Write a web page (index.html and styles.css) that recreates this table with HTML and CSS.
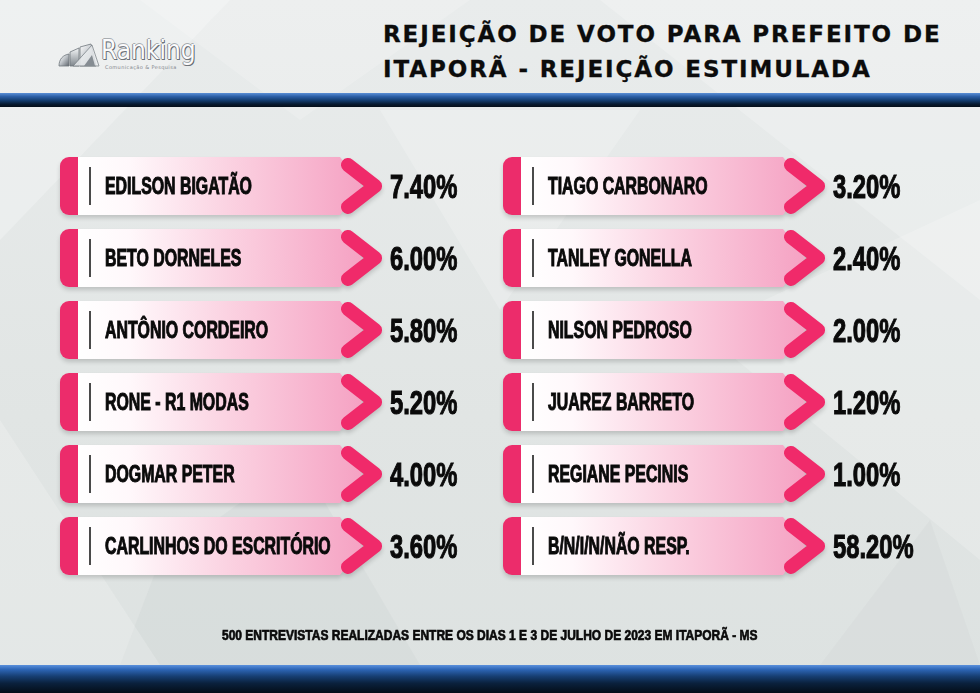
FILE: index.html
```html
<!DOCTYPE html>
<html lang="pt-BR">
<head>
<meta charset="utf-8">
<title>Rejeição de voto para prefeito de Itaporã</title>
<link rel="stylesheet" href="styles.css">
</head>
<body>
<div class="page">
  <svg class="bg" width="980" height="693" viewBox="0 0 980 693" aria-hidden="true">
    <polygon points="0,0 230,0 0,240" fill="#ffffff" opacity="0.25"/>
    <polygon points="140,0 470,0 300,120" fill="#ffffff" opacity="0.18"/>
    <polygon points="600,0 980,0 980,300" fill="#ffffff" opacity="0.22"/>
    <polygon points="380,110 640,110 500,310" fill="#ffffff" opacity="0.2"/>
    <polygon points="700,330 980,200 980,560" fill="#ffffff" opacity="0.2"/>
    <polygon points="160,560 300,460 420,665 120,665" fill="#cfd5d4" opacity="0.35"/>
    <polygon points="0,420 160,665 0,665" fill="#ffffff" opacity="0.2"/>
    <polygon points="820,665 930,520 980,665" fill="#cfd5d4" opacity="0.3"/>
  </svg>

  <header class="header">
    <div class="logo">
      <svg class="logo-icon" width="42" height="24" viewBox="0 0 42 24" aria-hidden="true">
        <defs>
          <linearGradient id="silver" x1="0" y1="0" x2="1" y2="1">
            <stop offset="0" stop-color="#ffffff"/>
            <stop offset="0.45" stop-color="#c4c9cd"/>
            <stop offset="1" stop-color="#5f666d"/>
          </linearGradient>
          <linearGradient id="silver2" x1="0" y1="0" x2="0" y2="1">
            <stop offset="0" stop-color="#f4f6f7"/>
            <stop offset="1" stop-color="#7f868c"/>
          </linearGradient>
        </defs>
        <path d="M1 23 C1 16 5 12 11 11 L11 23 Z" fill="url(#silver)" stroke="#6f767c" stroke-width="0.8"/>
        <path d="M12 23 L12 9 L21 5 L21 23 Z" fill="url(#silver2)" stroke="#6f767c" stroke-width="0.8"/>
        <path d="M22 23 L22 4 L33 1 L38 23 Z" fill="url(#silver)" stroke="#6f767c" stroke-width="0.8"/>
        <path d="M15 23 L34 2 L41 23 Z" fill="#e9ecee" stroke="#6f767c" stroke-width="0.8" opacity="0.85"/>
        <path d="M26 23 L34 12 L37 23 Z" fill="#858c92"/>
      </svg>
      <div class="logo-text">
        <span class="logo-name">Ranking</span>
        <span class="logo-sub">Comunicação &amp; Pesquisa</span>
      </div>
    </div>
    <h1 class="title">REJEIÇÃO DE VOTO PARA PREFEITO DE<br>ITAPORÃ - REJEIÇÃO ESTIMULADA</h1>
  </header>

  <div class="band band-top"></div>

  <main class="grid">
    <div class="row"><div class="bar"><div class="tab"></div><div class="body"><span class="sep"></span><span class="name">EDILSON BIGATÃO</span></div><svg class="chev" width="44" height="58" viewBox="0 0 44 58"><polyline points="8,8 35,29 8,50"/></svg></div><span class="pct">7.40%</span></div>
    <div class="row"><div class="bar"><div class="tab"></div><div class="body"><span class="sep"></span><span class="name">TIAGO CARBONARO</span></div><svg class="chev" width="44" height="58" viewBox="0 0 44 58"><polyline points="8,8 35,29 8,50"/></svg></div><span class="pct">3.20%</span></div>

    <div class="row"><div class="bar"><div class="tab"></div><div class="body"><span class="sep"></span><span class="name">BETO DORNELES</span></div><svg class="chev" width="44" height="58" viewBox="0 0 44 58"><polyline points="8,8 35,29 8,50"/></svg></div><span class="pct">6.00%</span></div>
    <div class="row"><div class="bar"><div class="tab"></div><div class="body"><span class="sep"></span><span class="name">TANLEY GONELLA</span></div><svg class="chev" width="44" height="58" viewBox="0 0 44 58"><polyline points="8,8 35,29 8,50"/></svg></div><span class="pct">2.40%</span></div>

    <div class="row"><div class="bar"><div class="tab"></div><div class="body"><span class="sep"></span><span class="name">ANTÔNIO CORDEIRO</span></div><svg class="chev" width="44" height="58" viewBox="0 0 44 58"><polyline points="8,8 35,29 8,50"/></svg></div><span class="pct">5.80%</span></div>
    <div class="row"><div class="bar"><div class="tab"></div><div class="body"><span class="sep"></span><span class="name">NILSON PEDROSO</span></div><svg class="chev" width="44" height="58" viewBox="0 0 44 58"><polyline points="8,8 35,29 8,50"/></svg></div><span class="pct">2.00%</span></div>

    <div class="row"><div class="bar"><div class="tab"></div><div class="body"><span class="sep"></span><span class="name">RONE - R1 MODAS</span></div><svg class="chev" width="44" height="58" viewBox="0 0 44 58"><polyline points="8,8 35,29 8,50"/></svg></div><span class="pct">5.20%</span></div>
    <div class="row"><div class="bar"><div class="tab"></div><div class="body"><span class="sep"></span><span class="name">JUAREZ BARRETO</span></div><svg class="chev" width="44" height="58" viewBox="0 0 44 58"><polyline points="8,8 35,29 8,50"/></svg></div><span class="pct">1.20%</span></div>

    <div class="row"><div class="bar"><div class="tab"></div><div class="body"><span class="sep"></span><span class="name">DOGMAR PETER</span></div><svg class="chev" width="44" height="58" viewBox="0 0 44 58"><polyline points="8,8 35,29 8,50"/></svg></div><span class="pct">4.00%</span></div>
    <div class="row"><div class="bar"><div class="tab"></div><div class="body"><span class="sep"></span><span class="name">REGIANE PECINIS</span></div><svg class="chev" width="44" height="58" viewBox="0 0 44 58"><polyline points="8,8 35,29 8,50"/></svg></div><span class="pct">1.00%</span></div>

    <div class="row"><div class="bar"><div class="tab"></div><div class="body"><span class="sep"></span><span class="name">CARLINHOS DO ESCRITÓRIO</span></div><svg class="chev" width="44" height="58" viewBox="0 0 44 58"><polyline points="8,8 35,29 8,50"/></svg></div><span class="pct">3.60%</span></div>
    <div class="row"><div class="bar"><div class="tab"></div><div class="body"><span class="sep"></span><span class="name">B/N/I/N/NÃO RESP.</span></div><svg class="chev" width="44" height="58" viewBox="0 0 44 58"><polyline points="8,8 35,29 8,50"/></svg></div><span class="pct">58.20%</span></div>
  </main>

  <div class="footnote"><span class="footnote-text">500 ENTREVISTAS REALIZADAS ENTRE OS DIAS 1 E 3 DE JULHO DE 2023 EM ITAPORÃ - MS</span></div>

  <div class="band band-bottom"></div>
</div>
</body>
</html>
```

FILE: styles.css
```css
* { box-sizing: border-box; }

html, body {
  margin: 0;
  padding: 0;
}

body {
  width: 980px;
  height: 693px;
  overflow: hidden;
  background: #e2e6e5;
  font-family: "Liberation Sans", Arial, sans-serif;
}

.page {
  position: relative;
  width: 980px;
  height: 693px;
  display: flex;
  flex-direction: column;
  background: linear-gradient(180deg, #e9ecec 0%, #e1e5e4 60%, #dde2e1 100%);
}

.bg {
  position: absolute;
  left: 0;
  top: 0;
  z-index: 0;
}

.header, .band, .grid, .footnote {
  position: relative;
  z-index: 1;
}

/* header */
.header {
  height: 93px;
  display: flex;
  align-items: flex-start;
}

.logo {
  display: flex;
  align-items: flex-start;
  gap: 1px;
  margin: 37px 0 0 58px;
  width: 325px;
}

.logo-icon {
  margin-top: 6px;
}

.logo-text {
  display: flex;
  flex-direction: column;
  align-items: flex-start;
}

.logo-name {
  font-family: "DejaVu Sans Condensed", "DejaVu Sans", sans-serif;
  font-stretch: condensed;
  font-size: 26px;
  line-height: 27px;
  color: #fbfbfc;
  text-shadow: 0 1px 0 #6f757b, 1px 1px 0 #5f656b, -1px 0 0 #8f959a, 0 -1px 0 #a8adb1;
}

.logo-sub {
  font-family: "DejaVu Sans", sans-serif;
  font-size: 5px;
  line-height: 6px;
  color: #7f858a;
  margin: 0 0 0 4px;
  letter-spacing: 0.4px;
}

.title {
  margin: 17px 0 0 0;
  font-family: "DejaVu Sans", "Liberation Sans", sans-serif;
  font-weight: 700;
  font-size: 23px;
  line-height: 35px;
  letter-spacing: 1.9px;
  color: #0c0c0c;
  -webkit-text-stroke: 0.3px #0c0c0c;
}

/* bands */
.band-top {
  height: 14px;
  background: linear-gradient(180deg, #5b8fd6 0%, #2c5fa6 25%, #123a6b 55%, #071a30 80%, #050e19 100%);
}

.band-bottom {
  margin-top: auto;
  height: 28px;
  background: linear-gradient(180deg, #5a90dc 0%, #2e67b8 15%, #173f73 40%, #0a213d 65%, #040d17 100%);
}

/* grid */
.grid {
  display: grid;
  grid-template-columns: 443px 443px;
  row-gap: 14px;
  padding: 50px 0 0 60px;
}

.row {
  display: flex;
  align-items: center;
  height: 58px;
}

.bar {
  position: relative;
  display: flex;
  width: 322px;
  height: 58px;
  flex: none;
  filter: drop-shadow(0 3px 2px rgba(0, 0, 0, 0.16));
}

.tab {
  width: 18px;
  height: 58px;
  background: #ec2c6b;
  border-radius: 9px 0 0 9px;
}

.body {
  width: 284px;
  height: 58px;
  display: flex;
  align-items: center;
  background: linear-gradient(90deg, #ffffff 0%, #fff8fb 18%, #fbd3e2 52%, #f5a2c3 100%);
  clip-path: polygon(0 0, calc(100% - 22px) 0, 100% 50%, calc(100% - 22px) 100%, 0 100%);
}

.sep {
  flex: none;
  width: 2px;
  height: 38px;
  margin-left: 11px;
  background: #4a4a4a;
}

.name {
  display: inline-block;
  margin-left: 14px;
  font-family: "Liberation Sans", Arial, sans-serif;
  font-weight: 700;
  font-size: 23px;
  line-height: 26px;
  color: #0a0a0a;
  white-space: nowrap;
  -webkit-text-stroke: 1px #0a0a0a;
  transform: scaleX(0.69);
  transform-origin: left center;
}

.chev {
  position: absolute;
  right: -2px;
  top: 0;
}

.chev polyline {
  fill: none;
  stroke: #f02a6a;
  stroke-width: 14;
  stroke-linecap: round;
  stroke-linejoin: round;
}

.pct {
  display: inline-block;
  margin-left: 8px;
  font-family: "Liberation Sans", Arial, sans-serif;
  font-weight: 700;
  font-size: 34px;
  line-height: 36px;
  color: #0a0a0a;
  white-space: nowrap;
  -webkit-text-stroke: 1.1px #0a0a0a;
  transform: scaleX(0.7);
  transform-origin: left center;
}

.footnote {
  margin-top: 51px;
  display: flex;
  justify-content: center;
}

.footnote-text {
  display: inline-block;
  font-family: "Liberation Sans", Arial, sans-serif;
  font-weight: 700;
  font-size: 15px;
  line-height: 18px;
  color: #0a0a0a;
  white-space: nowrap;
  -webkit-text-stroke: 0.7px #0a0a0a;
  transform: scaleX(0.8);
  transform-origin: center center;
}
```
